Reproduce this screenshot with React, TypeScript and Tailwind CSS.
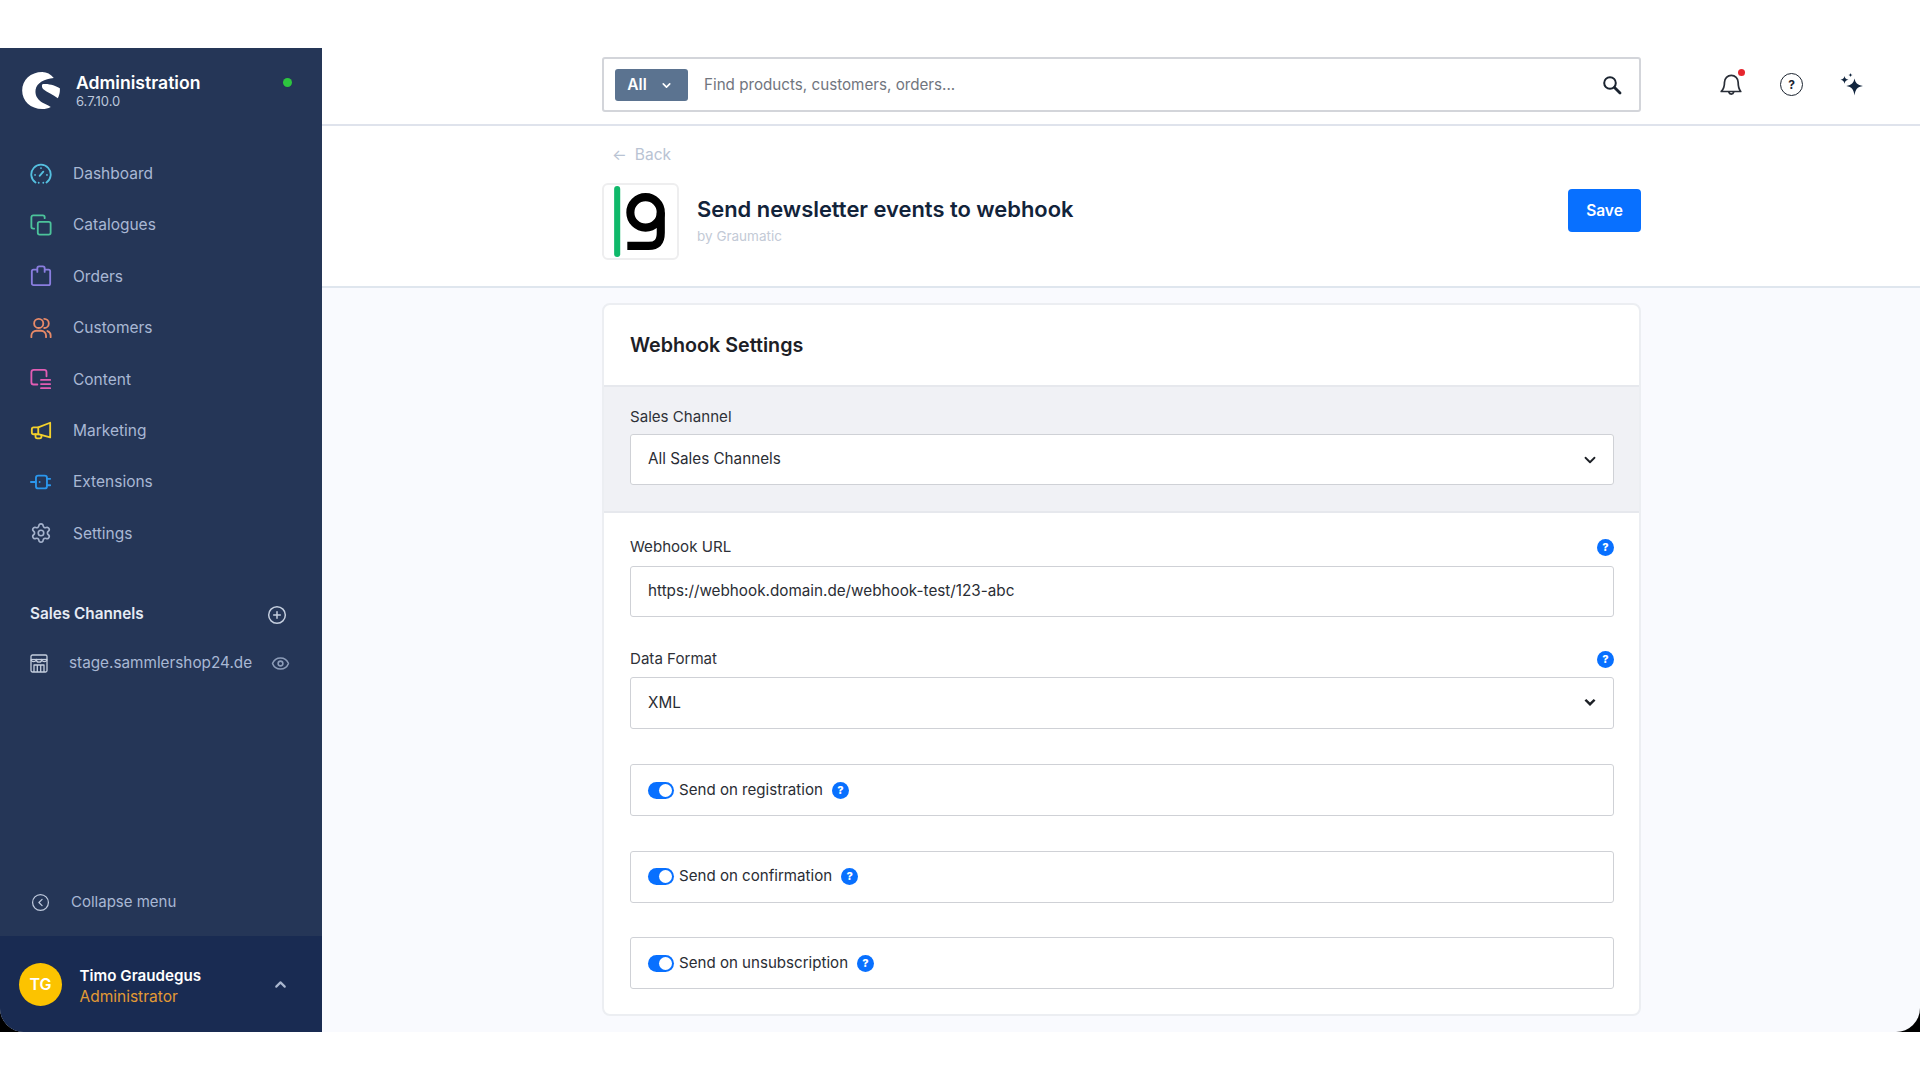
import { ChevronDown, ChevronUp, CircleChevronLeft, CirclePlus, Eye, Settings } from 'lucide-react'
import type { ReactNode } from 'react'

const iconProps = { width: 22, height: 22, viewBox: '0 0 24 24', fill: 'none', stroke: 'currentColor', strokeWidth: 2, strokeLinecap: 'round' as const, strokeLinejoin: 'round' as const }

const DashboardIcon = () => (
  <svg {...iconProps}>
    <path d="M6 21.200A10.600 10.600 0 1 1 18 21.200" />
    <path d="M10.500 14l4-4.500" />
    <path d="M5.500 13h.01M18.500 13h.01M12 5.500h.01M9.500 21.500h.01M14.500 21.500h.01" />
  </svg>
)
const CatalogIcon = () => (
  <svg {...iconProps}>
    <rect x="8.500" y="8.500" width="14" height="14" rx="2" />
    <path d="M4.500 16H3.500a2 2 0 0 1-2-2V3.500a2 2 0 0 1 2-2H14a2 2 0 0 1 2 2v1" />
  </svg>
)
const OrdersIcon = () => (
  <svg {...iconProps}>
    <path d="M7.500 5H3.800A1.800 1.800 0 0 0 2 6.800v13.400A1.800 1.800 0 0 0 3.800 22h16.400a1.800 1.800 0 0 0 1.800-1.800V6.800A1.800 1.800 0 0 0 20.200 5H16.500" />
    <path d="M8 7.500V3.500a2 2 0 0 1 2-2h4a2 2 0 0 1 2 2v4" />
  </svg>
)
const CustomersIcon = () => (
  <svg {...iconProps}>
    <circle cx="9.500" cy="7" r="5" />
    <path d="M1.500 22v-1.500a5.500 5.500 0 0 1 5.500-5.500h5a5.500 5.500 0 0 1 5.500 5.500V22" />
    <path d="M15.500 2a5 5 0 0 1 0 10" />
    <path d="M19 15.300a5 5 0 0 1 3.500 4.700V22" />
  </svg>
)
const ContentIcon = () => (
  <svg {...iconProps}>
    <path d="M8 18H4a2.500 2.500 0 0 1-2.500-2.500v-11A2.500 2.500 0 0 1 4 2h11.500A2.500 2.500 0 0 1 18 4.500V9" />
    <path d="M12 13h10M12 17.500h10M12 22h10" />
  </svg>
)
const MarketingIcon = () => (
  <svg {...iconProps}>
    <path d="M22 3v16L9 15.500H4a2 2 0 0 1-2-2V10a2 2 0 0 1 2-2h5z" />
    <path d="M9 8v7.500" />
    <path d="M6 15.500v2.500a2 2 0 0 0 2 2h2.500a2 2 0 0 0 2-2v-1.500" />
  </svg>
)
const ExtensionsIcon = () => (
  <svg {...iconProps}>
    <rect x="6.500" y="5" width="12" height="14" rx="2.500" />
    <path d="M1 12h5.500M18.500 8.500H22M18.500 15.500H22" />
    <path d="M10.500 12h.01" />
  </svg>
)
const StoreIcon = () => (
  <svg width="18" height="19" viewBox="0 0 18 19" fill="none" stroke="#c4cede" strokeWidth="1.300" strokeLinejoin="round">
    <rect x="1" y="1" width="16" height="17" rx="1.500" />
    <path d="M1 5.500h16" />
    <path d="M1 5.500a2.700 2.700 0 0 0 5.300 0 2.700 2.700 0 0 0 5.400 0 2.700 2.700 0 0 0 5.300 0" />
    <path d="M4 18v-7h10v7M7.300 11v7M10.700 11v7" />
  </svg>
)
const BellIcon = () => (
  <svg width="26" height="26" viewBox="0 0 24 24" fill="none" stroke="currentColor" strokeWidth="1.600" strokeLinecap="round" strokeLinejoin="round">
    <path d="M6 9.500a6.300 6.300 0 0 1 12.600 0c0 4.500.9 6.800 2.400 8.500H3c1.900-1.700 3-4 3-8.500z" />
    <path d="M10 18.500a2.300 2.300 0 0 0 4.500 0" />
  </svg>
)
const SearchIcon = () => (
  <svg width="20" height="20" viewBox="0 0 20 20" fill="none" stroke="#1b2430" strokeLinecap="round">
    <circle cx="8" cy="8" r="5.800" strokeWidth="2" />
    <path d="M12.500 12.500L18 18" strokeWidth="2.800" />
  </svg>
)
const SparkIcon = () => (
  <svg width="24" height="24" viewBox="0 0 24 24" fill="currentColor">
    <path d="M14.500 5.500c1 4.600 2.600 6.200 8.500 7.500-5.900 1.300-7.500 3-8.500 9.500-1-6.500-2.600-8.200-8.200-9.500 5.600-1.300 7.200-2.900 8.200-7.500z" />
    <path d="M4.500 3c.5 2.300 1.300 3.100 4 3.800-2.700.7-3.500 1.500-4 4-.5-2.500-1.300-3.300-4-4 2.700-.7 3.500-1.500 4-3.800z" />
    <path d="M10.500 0c.3 1.300.7 1.700 2.100 2.100-1.400.4-1.800.8-2.100 2.200-.3-1.400-.7-1.800-2.100-2.200 1.400-.4 1.800-.8 2.100-2.100z" />
  </svg>
)
const Logo = () => (
  <svg width="38" height="37" viewBox="0 0 112 110" fill="#fff">
    <path d="M60 0C25 0 0 24 0 55c0 31 25 55 60 55 9 0 17-2 25-6-8-6-24-10-34-20C43 76 38 66 40 52c3-19 27-32 54-34C85 6 73 0 60 0z" />
    <path d="M62 36c16-3 38 5 50 12 1 10-1 21-6 30C92 66 74 60 63 51c-5-4-6-13-1-15z" />
  </svg>
)
const GraumaticLogo = () => (
  <svg width="73" height="73" viewBox="2 2 72 72" fill="none">
    <rect x="12" y="3" width="6" height="70" rx="3" fill="#0fb96a" />
    <circle cx="43" cy="29" r="15" stroke="#000" strokeWidth="8" />
    <path d="M58 29v20c0 9-4 13-12 13H25" stroke="#000" strokeWidth="8" />
  </svg>
)

const Help = () => (
  <span className="flex h-[17px] w-[17px] shrink-0 items-center justify-center rounded-full bg-[#0870ff] text-[11px] font-extrabold leading-none text-white">?</span>
)

const Toggle = () => (
  <span className="flex h-[17px] w-[26px] shrink-0 items-center justify-end rounded-full bg-[#0870ff] pr-[2px]">
    <span className="h-[13px] w-[13px] rounded-full bg-white" />
  </span>
)

const navItems: { label: string; icon: ReactNode; color: string }[] = [
  { label: 'Dashboard', icon: <DashboardIcon />, color: 'text-[#55c0e0]' },
  { label: 'Catalogues', icon: <CatalogIcon />, color: 'text-[#4cc39b]' },
  { label: 'Orders', icon: <OrdersIcon />, color: 'text-[#8a7ee0]' },
  { label: 'Customers', icon: <CustomersIcon />, color: 'text-[#e78a68]' },
  { label: 'Content', icon: <ContentIcon />, color: 'text-[#e25db4]' },
  { label: 'Marketing', icon: <MarketingIcon />, color: 'text-[#f3d02c]' },
  { label: 'Extensions', icon: <ExtensionsIcon />, color: 'text-[#2b97ee]' },
  { label: 'Settings', icon: <Settings size={22} strokeWidth={1.8} />, color: 'text-[#a5b3cd]' },
]

const Sidebar = () => (
  <aside className="flex h-full w-[322px] shrink-0 flex-col bg-[#253657]">
    <div className="flex h-[100px] items-start pl-[22px] pt-[24px]">
      <Logo />
      <div className="ml-[16px]">
        <div className="text-[17.600px] font-semibold leading-[22px] text-white">Administration</div>
        <div className="text-[13px] leading-[14px] text-[#bcc7db]">6.7.10.0</div>
      </div>
      <span className="ml-[83px] mt-[6px] h-[9px] w-[9px] rounded-full bg-[#2dc63f]" />
    </div>
    <nav className="flex flex-col">
      {navItems.map((item) => (
        <div key={item.label} className="flex h-[51.400px] items-center pl-[30px]">
          <span className={`${item.color} flex w-[22px] justify-center`}>{item.icon}</span>
          <span className="ml-[21px] text-[15.500px] text-[#a9b8d4]">{item.label}</span>
        </div>
      ))}
    </nav>
    <div className="mt-[44px] flex items-center justify-between pl-[30px] pr-[35px]">
      <span className="text-[15.300px] font-semibold text-[#e6ebf4]">Sales Channels</span>
      <CirclePlus size={20} strokeWidth={1.800} className="text-[#c4cede]" />
    </div>
    <div className="mt-[26px] flex items-center pl-[30px] pr-[32px]">
      <StoreIcon />
      <span className="ml-[21px] flex-1 text-[15.300px] text-[#a9b8d4]">stage.sammlershop24.de</span>
      <Eye size={19} strokeWidth={2} className="text-[#8d9db9]" />
    </div>
    <div className="mt-auto flex h-[76px] items-center pl-[31px] pt-[9px]">
      <CircleChevronLeft size={19} strokeWidth={1.600} className="text-[#bcc7db]" />
      <span className="ml-[21px] text-[15px] text-[#a9b8d4]">Collapse menu</span>
    </div>
    <div className="flex h-[96px] items-center rounded-bl-[24px] bg-[#192b52] pl-[19px] pr-[33px]">
      <span className="flex h-[43px] w-[43px] items-center justify-center rounded-full bg-[#fcc300] text-[16px] font-semibold text-white">TG</span>
      <div className="ml-[17.500px] flex-1 pt-[3px]">
        <div className="text-[15.200px] font-semibold leading-[21px] text-white">Timo Graudegus</div>
        <div className="text-[15.500px] leading-[21px] text-[#e39a34]">Administrator</div>
      </div>
      <ChevronUp size={17} strokeWidth={3} className="text-[#aab7cf]" />
    </div>
  </aside>
)

const fieldClass = 'flex items-center justify-between rounded-[3px] border border-[#cfd1d6] bg-white pl-[17px] pr-[14px] text-[15.250px] text-[#2a2d34]'

const Field = ({ label, help, children }: { label: string; help?: boolean; children: ReactNode }) => (
  <div>
    <div className="flex h-[19px] items-center justify-between text-[15.100px] text-[#2e3138]">
      <span>{label}</span>
      {help && <Help />}
    </div>
    {children}
  </div>
)

const toggles = ['Send on registration', 'Send on confirmation', 'Send on unsubscription']

export default function App() {
  return (
    <div className="h-[1080px] w-[1920px] overflow-hidden bg-white font-['Inter',sans-serif]">
      <div className="h-[48px]" />
      <div className="h-[984px] bg-black">
        <div className="flex h-full overflow-hidden rounded-b-[24px] bg-[#f9fafe]">
          <Sidebar />
          <main className="flex min-w-0 flex-1 flex-col">
            <header className="flex h-[78px] shrink-0 items-center border-b-2 border-[#dfe3ec] bg-white pb-[3px] pl-[280px]">
              <div className="flex h-[55px] w-[1039px] items-center rounded-[3px] border-2 border-[#d3d5da] pl-[11px] pr-[17px] pt-[1px]">
                <span className="flex h-[32px] w-[73px] items-center justify-center gap-[13px] rounded-[3px] bg-[#5b7390] pr-[3px] text-[15.500px] font-semibold text-white">
                  All
                  <ChevronDown size={13} strokeWidth={3} />
                </span>
                <span className="ml-[16px] flex-1 text-[15.200px] text-[#71757e]">Find products, customers, orders...</span>
                <SearchIcon />
              </div>
              <div className="relative ml-[77px] text-[#2a2f38]">
                <BellIcon />
                <span className="absolute right-[-1px] top-[-3px] h-[7px] w-[7px] rounded-full bg-[#e6262e]" />
              </div>
              <span className="ml-[36px] flex h-[23px] w-[23px] items-center justify-center rounded-full border-[1.600px] border-[#1b2430] text-[12px] font-bold text-[#1b2430]">?</span>
              <span className="ml-[37px] text-[#12263f]"><SparkIcon /></span>
            </header>
            <section className="flex h-[162px] shrink-0 flex-col border-b-2 border-[#dfe6ee] bg-white pl-[280px] pr-[279px]">
              <div className="mt-[17px] flex items-center pl-[10px] text-[15.500px] text-[#b9c3d3]">
                <span className="mr-[8px]">←</span>Back
              </div>
              <div className="mt-[17px] flex items-start">
                <span className="flex h-[77px] w-[77px] items-center justify-center rounded-[6px] border-2 border-[#eeeeef] bg-white"><GraumaticLogo /></span>
                <div className="ml-[18px] flex-1 pt-[12px]">
                  <div className="text-[21.900px] font-semibold leading-[28px] text-[#12233a]">Send newsletter events to webhook</div>
                  <div className="mt-[3px] text-[13.500px] text-[#c3cad6]">by Graumatic</div>
                </div>
                <button className="mt-[5.500px] h-[43px] w-[73px] rounded-[4px] bg-[#0870ff] text-[15.500px] font-semibold text-white">Save</button>
              </div>
            </section>
            <div className="pl-[280px] pt-[15px]">
              <div className="w-[1039px] overflow-hidden rounded-[8px] border-2 border-[#eceef2] bg-white">
                <div className="flex h-[80px] items-center pl-[26px] pt-[1px] text-[19.700px] font-semibold text-[#1d2026]">Webhook Settings</div>
                <div className="h-[128px] border-y-2 border-[#e6e8ed] bg-[#f0f1f5] pl-[26px] pr-[25px] pt-[21px]">
                  <Field label="Sales Channel">
                    <div className={`${fieldClass} mt-[7px] h-[51px]`}>
                      All Sales Channels
                      <ChevronDown size={18} strokeWidth={2.400} className="text-[#1d2026]" />
                    </div>
                  </Field>
                </div>
                <div className="flex flex-col pl-[26px] pr-[25px] pt-[25px]">
                  <Field label="Webhook URL" help>
                    <div className={`${fieldClass} mt-[9px] h-[51px]`}>https://webhook.domain.de/webhook-test/123-abc</div>
                  </Field>
                  <div className="mt-[33px]">
                    <Field label="Data Format" help>
                      <div className={`${fieldClass} mt-[8px] h-[52px]`}>
                        XML
                        <svg width="18" height="18" viewBox="0 0 18 18" fill="#1d2026"><path d="M3.500 6.500L5.300 5 9 8.500 12.700 5l1.800 1.500L9 12z" /></svg>
                      </div>
                    </Field>
                  </div>
                  <div className="mb-[25px] mt-[35px] flex flex-col gap-[34.500px]">
                    {toggles.map((t) => (
                      <div key={t} className={`${fieldClass} h-[52px] !justify-start !text-[15.100px]`}>
                        <Toggle />
                        <span className="ml-[5px]">{t}</span>
                        <span className="ml-[9px]"><Help /></span>
                      </div>
                    ))}
                  </div>
                </div>
              </div>
            </div>
          </main>
        </div>
      </div>
    </div>
  )
}
